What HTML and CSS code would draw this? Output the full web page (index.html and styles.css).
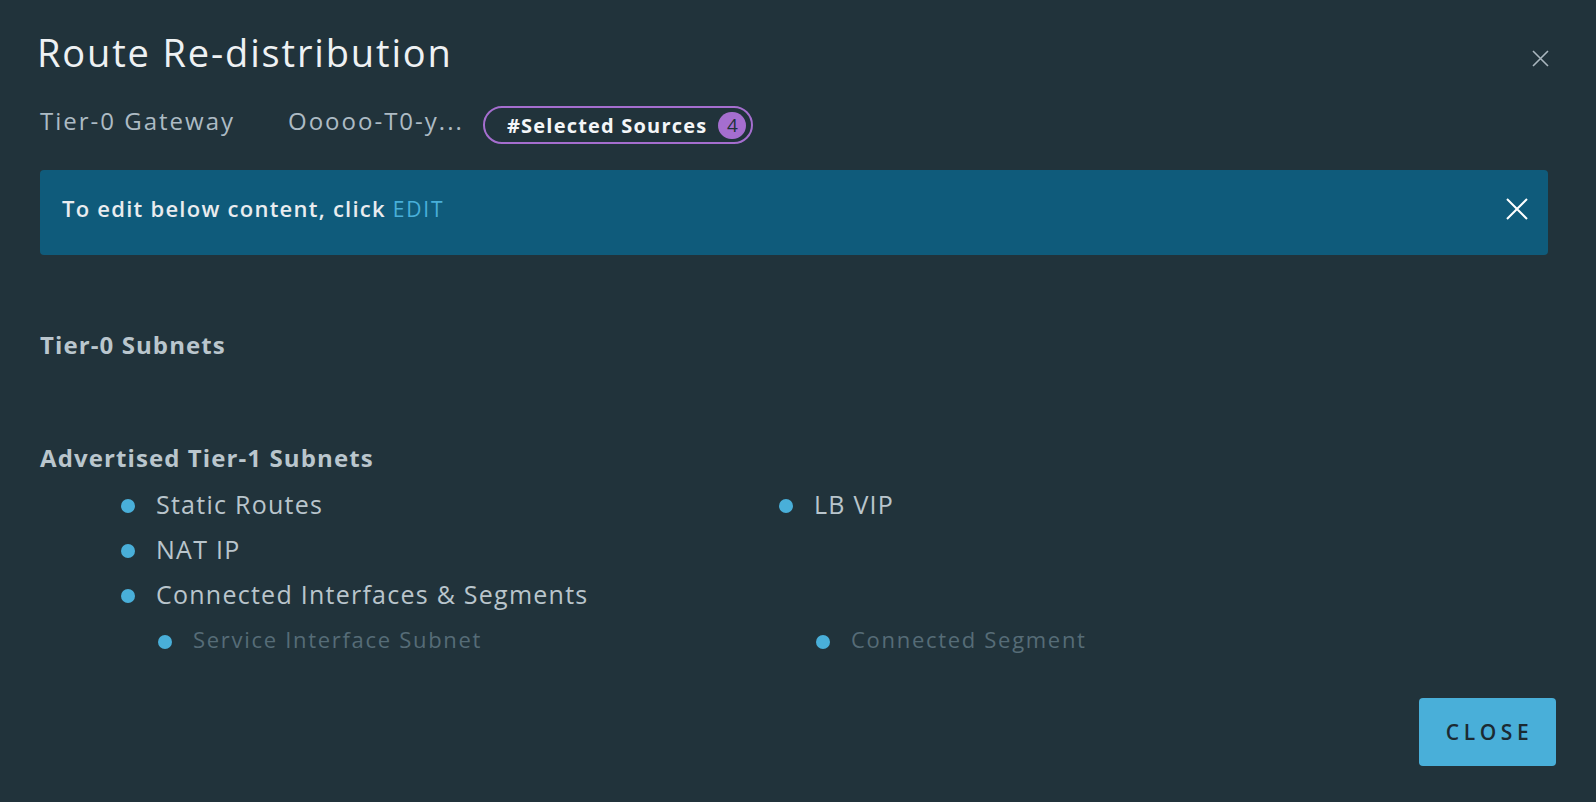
FILE: index.html
```html
<!DOCTYPE html>
<html lang="en">
<head>
<meta charset="utf-8">
<title>Route Re-distribution</title>
<link rel="stylesheet" href="styles.css">
</head>
<body>
<div class="modal">
  <header class="modal-header">
    <h1 class="modal-title">Route Re-distribution</h1>
    <button class="modal-close" aria-label="Close">
      <svg width="17" height="17" viewBox="0 0 17 17"><path d="M1 1L16 16M16 1L1 16" stroke="#a9b6be" stroke-width="1.6" fill="none"/></svg>
    </button>
  </header>

  <div class="meta">
    <span class="meta-label">Tier-0 Gateway</span>
    <span class="meta-value">Ooooo-T0-y...</span>
    <span class="badge">#Selected Sources <span class="badge-count">4</span></span>
  </div>

  <div class="alert">
    <span class="alert-text">To edit below content, click <a class="alert-link">EDIT</a></span>
    <button class="alert-close" aria-label="Dismiss">
      <svg width="22" height="22" viewBox="0 0 22 22"><path d="M1 1L21 21M21 1L1 21" stroke="#ffffff" stroke-width="2" fill="none"/></svg>
    </button>
  </div>

  <section class="group group-t0">
    <h2 class="group-title">Tier-0 Subnets</h2>
  </section>

  <section class="group group-t1">
    <h2 class="group-title">Advertised Tier-1 Subnets</h2>
    <ul class="opts">
      <li class="opt">Static Routes</li>
      <li class="opt">LB VIP</li>
      <li class="opt">NAT IP</li>
      <li class="opt-empty"></li>
      <li class="opt opt-wide">Connected Interfaces &amp; Segments</li>
    </ul>
    <ul class="opts opts-sub">
      <li class="opt">Service Interface Subnet</li>
      <li class="opt">Connected Segment</li>
    </ul>
  </section>

  <footer class="modal-footer">
    <button class="btn-primary">CLOSE</button>
  </footer>
</div>
</body>
</html>
```
FILE: styles.css
```css
* { box-sizing: border-box; }
html, body { margin: 0; padding: 0; }
body {
  background: #21333b;
  font-family: "Open Sans", "Noto Sans", sans-serif;
  width: 1596px;
  height: 802px;
  overflow: hidden;
}
.modal {
  padding: 29px 40px 0 40px;
}
.modal-header {
  display: flex;
  justify-content: space-between;
  align-items: flex-start;
}
.modal-title {
  margin: 0 0 0 -3px;
  font-size: 38px;
  line-height: 46px;
  font-weight: 400;
  color: #eef1f3;
  letter-spacing: 1.85px;
}
.modal-close {
  background: none;
  border: 0;
  padding: 0;
  margin: 21px 7px 0 0;
  width: 17px;
  height: 17px;
  display: block;
}
.modal-close svg, .alert-close svg { display: block; }

.meta {
  margin-top: 31px;
  display: flex;
  align-items: flex-start;
  height: 38px;
}
.meta-label, .meta-value {
  font-size: 24px;
  line-height: 30px;
  color: #adbbc4;
  letter-spacing: 2px;
}
.meta-label { width: 248px; }
.meta-value { width: 195px; }
.badge {
  display: flex;
  align-items: center;
  height: 38px;
  padding: 0 5px 0 22px;
  border: 2px solid #a56ecf;
  border-radius: 19px;
  color: #f4f6f8;
  font-size: 20px;
  font-weight: 700;
  letter-spacing: 1.2px;
}
.badge-count {
  margin-left: 11px;
  width: 28px;
  height: 27px;
  border-radius: 14px;
  background: #a56ecf;
  color: #21333b;
  font-size: 19px;
  font-weight: 400;
  letter-spacing: 0;
  display: flex;
  align-items: center;
  justify-content: center;
}

.alert {
  margin: 26px 8px 0 0;
  height: 85px;
  background: #0f5b7b;
  border-radius: 4px;
  display: flex;
  align-items: center;
  justify-content: space-between;
  padding: 0 20px 8px 22px;
}
.alert-text {
  font-size: 22px;
  line-height: 30px;
  font-weight: 600;
  color: #e9ecef;
  letter-spacing: 1.25px;
}
.alert-link {
  color: #49afd9;
  font-size: 21px;
  font-weight: 400;
  letter-spacing: 1.8px;
}
.alert-close {
  background: none;
  border: 0;
  padding: 0;
  width: 22px;
  height: 22px;
}

.group-title {
  margin: 0;
  font-size: 24px;
  line-height: 30px;
  font-weight: 700;
  color: #bac6cd;
  letter-spacing: 1.1px;
}
.group-t0 { margin-top: 75px; height: 113px; }

.opts {
  list-style: none;
  margin: 8px 0 0 0;
  padding: 0 0 0 81px;
  display: grid;
  grid-template-columns: 658px 658px;
}
.opt {
  display: flex;
  align-items: center;
  height: 45px;
  font-size: 25px;
  color: #b9c5cc;
  letter-spacing: 1.25px;
}
.opt::before {
  content: "";
  width: 14px;
  height: 14px;
  border-radius: 50%;
  background: #49afd9;
  margin-right: 21px;
  flex: none;
  position: relative;
  top: 2px;
}
.opt-wide { grid-column: 1 / span 2; }
.opts-sub {
  margin-top: 0;
  padding-left: 118px;
}
.opts-sub .opt {
  font-size: 22px;
  color: #566c77;
  letter-spacing: 1.7px;
}
.opts-sub .opt::before {
  margin-right: 21px;
  top: 3px;
}

.modal-footer {
  margin-top: 37px;
  display: flex;
  justify-content: flex-end;
}
.btn-primary {
  width: 137px;
  height: 68px;
  background: #49afd9;
  border: 0;
  border-radius: 4px;
  color: #1b2a32;
  font-family: "Open Sans", "Noto Sans", sans-serif;
  font-size: 21px;
  font-weight: 600;
  letter-spacing: 4.6px;
  padding: 0 0 0 4px;
}
```
